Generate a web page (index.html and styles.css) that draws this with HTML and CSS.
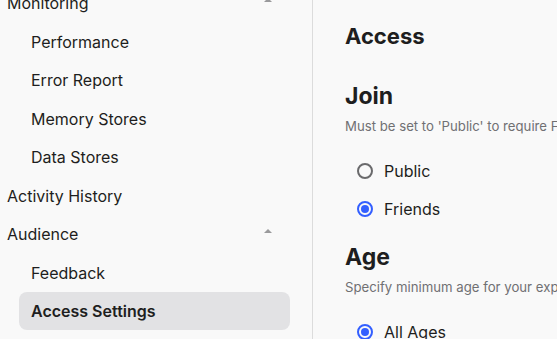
FILE: index.html
```html
<!DOCTYPE html>
<html>
<head>
<meta charset="utf-8">
<link rel="stylesheet" href="styles.css">
</head>
<body>
<div class="app">
  <nav class="sidebar">
    <div class="nav-item top">Monitoring<span class="caret"></span></div>
    <div class="nav-item sub">Performance</div>
    <div class="nav-item sub">Error Report</div>
    <div class="nav-item sub">Memory Stores</div>
    <div class="nav-item sub">Data Stores</div>
    <div class="nav-item top">Activity History</div>
    <div class="nav-item top">Audience<span class="caret"></span></div>
    <div class="nav-item sub">Feedback</div>
    <div class="nav-item sub active">Access Settings</div>
  </nav>
  <main class="content">
    <h1 class="page-title">Access</h1>
    <section class="section">
      <h2 class="section-title">Join</h2>
      <p class="section-desc">Must be set to 'Public' to require Friends for access to your experience.</p>
      <div class="radio-group">
        <label class="radio"><span class="radio-dot"></span>Public</label>
        <label class="radio"><span class="radio-dot checked"></span>Friends</label>
      </div>
    </section>
    <section class="section">
      <h2 class="section-title">Age</h2>
      <p class="section-desc">Specify minimum age for your experience.</p>
      <div class="radio-group">
        <label class="radio"><span class="radio-dot checked"></span>All Ages</label>
      </div>
    </section>
  </main>
</div>
</body>
</html>
```

FILE: styles.css
```css
* { box-sizing: border-box; }
html, body { margin: 0; padding: 0; }
body {
  background: #f9f9f9;
  font-family: Inter, "Noto Sans", sans-serif;
  color: #1e1e20;
  overflow: hidden;
  width: 557px;
  height: 339px;
}
.app {
  display: flex;
  height: 339px;
}
.sidebar {
  width: 313px;
  flex: none;
  border-right: 1px solid #dcdcdc;
  margin-top: -16px;
  padding-right: 22px;
}
.nav-item {
  height: 38.5px;
  display: flex;
  align-items: center;
  font-size: 16px;
  position: relative;
}
.nav-item.top { padding-left: 7px; }
.nav-item.sub { margin-left: 19px; padding-left: 12px; border-radius: 8px; }
.nav-item.active {
  background: #e2e2e4;
  font-weight: 600;
  height: 38px;
}
.caret {
  margin-left: auto;
  margin-right: 18px;
  width: 0; height: 0;
  border-left: 4px solid transparent;
  border-right: 4px solid transparent;
  border-bottom: 4px solid #9a9a9c;
  transform: translateY(-3px);
}
.content {
  padding: 19px 0 0 32px;
  flex: 1;
  white-space: nowrap;
  overflow: hidden;
}
.page-title {
  margin: 0;
  font-size: 22px;
  font-weight: 700;
  line-height: 34px;
}
.section { margin-top: 29px; }
.section + .section { margin-top: 15px; }
.section-title {
  margin: 0;
  font-size: 23px;
  font-weight: 700;
  line-height: 28px;
}
.section-desc {
  margin: 8px 0 0;
  font-size: 13.2px;
  color: #707073;
  line-height: 16px;
}
.radio-group {
  display: flex;
  flex-direction: column;
  margin-top: 18px;
}
.radio {
  display: flex;
  align-items: center;
  height: 38px;
  font-size: 16px;
  padding-left: 12px;
}
.radio-dot {
  width: 16px;
  height: 16px;
  border-radius: 50%;
  border: 2px solid #6a6a6c;
  margin-right: 11px;
  flex: none;
  position: relative;
}
.radio-dot.checked {
  border-color: #335fff;
}
.radio-dot.checked::after {
  content: "";
  position: absolute;
  left: 2px; top: 2px;
  width: 8px; height: 8px;
  border-radius: 50%;
  background: #335fff;
}
```
